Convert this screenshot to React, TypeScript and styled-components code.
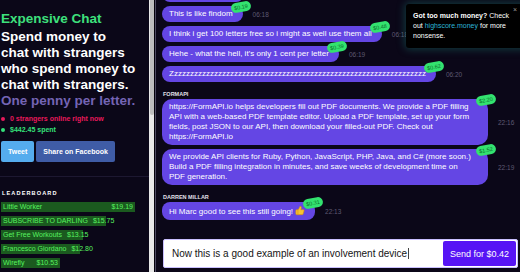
import React from "react";
import styled, { createGlobalStyle } from "styled-components";

const GlobalStyle = createGlobalStyle`
  html, body { margin: 0; padding: 0; background: #0b0718; }
  body { font-family: "Liberation Sans", Arial, sans-serif; }
  #root { width: 520px; height: 272px; overflow: hidden; }
  * { box-sizing: border-box; }
`;

const Page = styled.div`
  position: relative;
  display: flex;
  width: 520px;
  height: 272px;
  overflow: hidden;
  background: #0b0718;
`;

const Sidebar = styled.aside`
  width: 149px;
  flex-shrink: 0;
  display: flex;
  flex-direction: column;
  padding: 11px 0 0 1px;
  overflow: hidden;
`;

const Title = styled.h1`
  margin: 0;
  font-size: 13.5px;
  line-height: 16px;
  font-weight: 700;
  color: #3ee07c;
  white-space: nowrap;
`;

const Tagline = styled.p`
  margin: 2px 0 0;
  font-size: 13.5px;
  line-height: 16px;
  font-weight: 700;
  color: #ffffff;
  white-space: nowrap;
`;

const Muted = styled.span`
  display: block;
  color: #7464b4;
`;

const StatusList = styled.div`
  margin-top: 4px;
  display: flex;
  flex-direction: column;
`;

const StatusLine = styled.div<{ $color: string }>`
  display: flex;
  align-items: center;
  gap: 5px;
  font-size: 7px;
  line-height: 11px;
  font-weight: 700;
  color: ${(p) => p.$color};
  white-space: nowrap;
`;

const Dot = styled.span`
  width: 4px;
  height: 4px;
  border-radius: 50%;
  background: currentColor;
  flex-shrink: 0;
`;

const ShareRow = styled.div`
  margin-top: 6px;
  display: flex;
  gap: 2px;
`;

const ShareButton = styled.button<{ $bg: string }>`
  height: 21px;
  padding: 0 7px;
  border: none;
  border-radius: 2px;
  background: ${(p) => p.$bg};
  color: #ffffff;
  font-family: inherit;
  font-size: 7px;
  font-weight: 700;
  white-space: nowrap;
`;

const Divider = styled.hr`
  margin: 14px 0 0 -1px;
  height: 1px;
  border: none;
  background: #1d1831;
`;

const BoardHeading = styled.h2`
  margin: 11px 0 0 1px;
  font-size: 5.6px;
  line-height: 10px;
  font-weight: 700;
  letter-spacing: 1.1px;
  color: #ffffff;
`;

const Board = styled.div`
  margin-top: 4px;
  display: flex;
  flex-direction: column;
  align-items: flex-start;
  gap: 4px;
`;

const BoardRow = styled.div`
  display: flex;
  justify-content: space-between;
  gap: 5px;
  width: max-content;
  height: 10px;
  padding: 0 2px;
  font-size: 7px;
  line-height: 10px;
  color: #57f25f;
  white-space: nowrap;
  background-image: linear-gradient(#1b5a1f, #1b5a1f);
  background-repeat: no-repeat;
`;

const ScrollTrack = styled.div`
  width: 6px;
  flex-shrink: 0;
  display: flex;
  flex-direction: column;
  background: #e8e8e8;
  border-right: 1px solid #05030c;
`;

const ScrollThumb = styled.div`
  height: 115px;
  margin: 0 0.5px;
  border-radius: 0 0 2px 2px;
  background: #bdbdbd;
`;

const Chat = styled.main`
  flex: 1;
  min-width: 0;
  display: flex;
  flex-direction: column;
  border-left: 1px solid #4f4b63;
`;

const Messages = styled.div`
  flex: 1;
  min-height: 0;
  overflow: hidden;
  display: flex;
  flex-direction: column;
  justify-content: flex-end;
  padding: 0 0 16px 6px;
`;

const Group = styled.section`
  display: flex;
  flex-direction: column;
  align-items: flex-start;
  & + & {
    margin-top: 9px;
  }
`;

const Sender = styled.div`
  margin: 0 0 2px 1px;
  font-size: 5.5px;
  line-height: 6px;
  font-weight: 700;
  color: #e2e0ea;
`;

const Row = styled.div`
  display: flex;
  align-items: center;
  gap: 10px;
  & + & {
    margin-top: 4px;
  }
`;

const Bubble = styled.div<{ $wide?: boolean; $width?: number }>`
  position: relative;
  padding: 3px 10px 3px 7px;
  border-radius: ${(p) => (p.$wide ? "10px" : "8px")};
  background: #6446e4;
  color: #ffffff;
  font-size: 8px;
  line-height: 10px;
  min-height: 16px;
  white-space: nowrap;
  width: ${(p) => (p.$wide ? "326px" : p.$width ? `${p.$width}px` : "auto")};
`;

const Badge = styled.span`
  position: absolute;
  top: -4px;
  right: -8px;
  padding: 2px 3px;
  border-radius: 5px;
  background: #33e26f;
  color: #0b6a2b;
  font-size: 5.5px;
  line-height: 6px;
  transform: rotate(-10deg);
`;

const Time = styled.span`
  font-size: 6.5px;
  color: #5e5972;
  white-space: nowrap;
`;

const Emoji = styled.svg`
  width: 10px;
  height: 11px;
  vertical-align: -2px;
  margin-left: 2px;
`;

const InputBar = styled.div`
  padding: 3px 2px 4px 7px;
`;

const InputBox = styled.div`
  display: flex;
  align-items: center;
  height: 29px;
  padding: 1px;
  border: 1px solid #c9bfff;
  border-radius: 2px;
  background: #ffffff;
`;

const InputText = styled.div`
  flex: 1;
  padding-left: 7px;
  font-size: 10px;
  color: #141414;
  white-space: nowrap;
  overflow: hidden;
`;

const Caret = styled.span`
  display: inline-block;
  width: 1px;
  height: 11px;
  margin-left: 1px;
  vertical-align: -2px;
  background: #444;
`;

const SendButton = styled.button`
  height: 25px;
  padding: 0 7px;
  border: none;
  border-radius: 2px;
  background: #5714f5;
  color: #ffffff;
  font-family: inherit;
  font-size: 9px;
  white-space: nowrap;
`;

const Promo = styled.div`
  position: absolute;
  top: 4px;
  left: 406px;
  width: 124px;
  padding: 7px 9px 7px 7px;
  border-radius: 3px;
  background: #000000;
  color: #ffffff;
  font-size: 7px;
  line-height: 10px;
  white-space: nowrap;
  box-shadow: 0 0 8px 1px rgba(32, 170, 140, 0.35);
`;

const PromoLink = styled.span`
  color: #2cb5d6;
`;

const Close = styled.span`
  position: absolute;
  top: 2px;
  right: 13px;
  font-size: 7px;
  line-height: 8px;
  color: #9a9a9a;
`;

const leaders = [
  { name: "Little Worker", amount: "$19.19", w: 134 },
  { name: "SUBSCRIBE TO DARLING", amount: "$15.75", w: 105 },
  { name: "Get Free Workouts", amount: "$13.15", w: 82 },
  { name: "Francesco Giordano", amount: "$12.80", w: 79 },
  { name: "Wirefly", amount: "$10.53", w: 59 },
];

const ThumbsUp = () => (
  <Emoji viewBox="0 0 24 24">
    <path
      d="M7 10v12M15 5.88 14 10h5.83a2 2 0 0 1 1.92 2.56l-2.33 8A2 2 0 0 1 17.5 22H4a2 2 0 0 1-2-2v-8a2 2 0 0 1 2-2h2.76a2 2 0 0 0 1.79-1.11L12 2a3.13 3.13 0 0 1 3 3.88Z"
      fill="#f7c531"
      stroke="#d98c10"
      strokeWidth="1.5"
      strokeLinejoin="round"
    />
  </Emoji>
);

type Msg = { text: React.ReactNode; price: string; time: string; wide?: boolean };

const Message = ({ text, price, time, wide }: Msg) => (
  <Row>
    <Bubble $wide={wide}>
      {text}
      <Badge>{price}</Badge>
    </Bubble>
    <Time>{time}</Time>
  </Row>
);

export default function App() {
  return (
    <Page>
      <GlobalStyle />
      <Sidebar>
        <Title>Expensive Chat</Title>
        <Tagline>
          Spend money to
          <br />
          chat with strangers
          <br />
          who spend money to
          <br />
          chat with strangers.
          <Muted>One penny per letter.</Muted>
        </Tagline>
        <StatusList>
          <StatusLine $color="#e8195b">
            <Dot />0 strangers online right now
          </StatusLine>
          <StatusLine $color="#35e07a">
            <Dot />$442.45 spent
          </StatusLine>
        </StatusList>
        <ShareRow>
          <ShareButton $bg="#55acee">Tweet</ShareButton>
          <ShareButton $bg="#3f5ca6">Share on Facebook</ShareButton>
        </ShareRow>
        <Divider />
        <BoardHeading>LEADERBOARD</BoardHeading>
        <Board>
          {leaders.map((l) => (
            <BoardRow
              key={l.name}
              style={{ minWidth: l.w, backgroundSize: `${l.w}px 100%` }}
            >
              <span>{l.name}</span>
              <span>{l.amount}</span>
            </BoardRow>
          ))}
        </Board>
      </Sidebar>
      <ScrollTrack>
        <ScrollThumb />
      </ScrollTrack>
      <Chat>
        <Messages>
          <Group>
            <Row>
              <Bubble $width={82} />
            </Row>
            <Message text="This is like findom" price="$0.19" time="06:18" />
            <Message
              text="I think i get 100 letters free so i might as well use them all"
              price="$0.48"
              time="06:18"
            />
            <Message
              text="Hehe - what the hell, it’s only 1 cent per letter"
              price="$0.39"
              time="06:19"
            />
            <Message
              text={"Z" + "z".repeat(63)}
              price="$0.62"
              time="06:20"
            />
          </Group>
          <Group>
            <Sender>FORMAPI</Sender>
            <Message
              wide
              price="$2.20"
              time="22:16"
              text={
                <>
                  https://FormAPI.io helps developers fill out PDF documents. We provide a PDF filling
                  <br />
                  API with a web-based PDF template editor. Upload a PDF template, set up your form
                  <br />
                  fields, post JSON to our API, then download your filled-out PDF. Check out
                  <br />
                  https://FormAPI.io
                </>
              }
            />
            <Message
              wide
              price="$1.52"
              time="22:19"
              text={
                <>
                  We provide API clients for Ruby, Python, JavaScript, PHP, Java, and C# (more soon.)
                  <br />
                  Build a PDF filling integration in minutes, and save weeks of development time on
                  <br />
                  PDF generation.
                </>
              }
            />
          </Group>
          <Group>
            <Sender>DARREN MILLAR</Sender>
            <Message
              price="$0.31"
              time="22:13"
              text={
                <>
                  Hi Marc good to see this still going!
                  <ThumbsUp />
                </>
              }
            />
          </Group>
        </Messages>
        <InputBar>
          <InputBox>
            <InputText>
              Now this is a good example of an involvement device
              <Caret />
            </InputText>
            <SendButton>Send for $0.42</SendButton>
          </InputBox>
        </InputBar>
      </Chat>
      <Promo>
        <Close>×</Close>
        <strong>Got too much money?</strong> Check
        <br />
        out <PromoLink>highscore.money</PromoLink> for more
        <br />
        nonsense.
      </Promo>
    </Page>
  );
}
